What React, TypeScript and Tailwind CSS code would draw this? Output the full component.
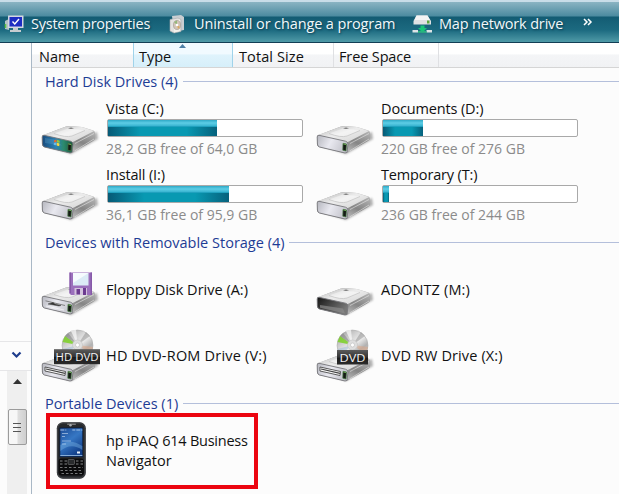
import type { ReactNode } from 'react';

type Media = 'system' | 'disk' | 'floppy' | 'empty' | 'hddvd' | 'dvd';

interface Drive {
  name: string;
  media: Media;
  tracking: string;
  used?: number;
  free?: string;
}

const HARD_DISKS: Drive[] = [
  { name: 'Vista (C:)', media: 'system', tracking: 'tracking-normal', used: 109, free: '28,2 GB free of 64,0 GB' },
  { name: 'Documents (D:)', media: 'disk', tracking: 'tracking-[-0.14px]', used: 40, free: '220 GB free of 276 GB' },
  { name: 'Install (I:)', media: 'disk', tracking: 'tracking-[-0.15px]', used: 121, free: '36,1 GB free of 95,9 GB' },
  { name: 'Temporary (T:)', media: 'disk', tracking: 'tracking-[-0.15px]', used: 6, free: '236 GB free of 244 GB' },
];

const REMOVABLE: Drive[] = [
  { name: 'Floppy Disk Drive (A:)', media: 'floppy', tracking: 'tracking-normal' },
  { name: 'ADONTZ (M:)', media: 'empty', tracking: 'tracking-[0.15px]' },
  { name: 'HD DVD-ROM Drive (V:)', media: 'hddvd', tracking: 'tracking-[0.2px]' },
  { name: 'DVD RW Drive (X:)', media: 'dvd', tracking: 'tracking-[0.12px]' },
];

/** Gradients shared by every drive icon on the page. */
function IconDefs() {
  return (
    <svg className="absolute h-0 w-0" aria-hidden="true">
      <defs>
        <linearGradient id="case-top" x1="0" y1="0" x2="1" y2="1">
          <stop offset="0" stopColor="#b4b4b4" />
          <stop offset="0.45" stopColor="#ececec" />
          <stop offset="1" stopColor="#d2d2d2" />
        </linearGradient>
        <linearGradient id="case-side" x1="0" y1="1" x2="0.8" y2="0">
          <stop offset="0" stopColor="#5c5c5c" />
          <stop offset="0.35" stopColor="#b4b4b4" />
          <stop offset="0.6" stopColor="#858585" />
          <stop offset="1" stopColor="#b9b9b9" />
        </linearGradient>
        <linearGradient id="case-front" x1="0" y1="0" x2="1" y2="0.3">
          <stop offset="0" stopColor="#b5b6be" />
          <stop offset="0.5" stopColor="#e9e9f0" />
          <stop offset="1" stopColor="#c6c6ce" />
        </linearGradient>
        <linearGradient id="front-system" x1="0" y1="0" x2="1" y2="0">
          <stop offset="0" stopColor="#184a7c" />
          <stop offset="0.45" stopColor="#2b82b5" />
          <stop offset="0.7" stopColor="#2c8a6b" />
          <stop offset="1" stopColor="#14533f" />
        </linearGradient>
        <linearGradient id="front-empty" x1="0" y1="0" x2="1" y2="0.5">
          <stop offset="0" stopColor="#151515" />
          <stop offset="1" stopColor="#777" />
        </linearGradient>
        <linearGradient id="disc" x1="0.1" y1="0" x2="0.9" y2="1">
          <stop offset="0" stopColor="#9b9b9b" />
          <stop offset="0.3" stopColor="#d0d0d0" />
          <stop offset="0.5" stopColor="#ededed" />
          <stop offset="0.7" stopColor="#b2b2b2" />
          <stop offset="1" stopColor="#d9d4cf" />
        </linearGradient>
        <linearGradient id="badge" x1="0" y1="0" x2="0" y2="1">
          <stop offset="0" stopColor="#5b5b5b" />
          <stop offset="0.5" stopColor="#333" />
          <stop offset="0.55" stopColor="#1b1b1b" />
          <stop offset="1" stopColor="#2b2b2b" />
        </linearGradient>
        <linearGradient id="phone-screen" x1="0" y1="0" x2="0.6" y2="1">
          <stop offset="0" stopColor="#1d4c96" />
          <stop offset="0.5" stopColor="#3677c4" />
          <stop offset="1" stopColor="#123f8a" />
        </linearGradient>
        <filter id="soft" x="-20%" y="-20%" width="140%" height="150%">
          <feGaussianBlur stdDeviation="1.3" />
        </filter>
      </defs>
    </svg>
  );
}

const FRONT_FILL: Record<Media, string> = {
  system: 'url(#front-system)',
  disk: 'url(#case-front)',
  floppy: 'url(#case-front)',
  empty: 'url(#front-empty)',
  hddvd: 'url(#case-front)',
  dvd: 'url(#case-front)',
};

function Disc() {
  return (
    <g>
      <circle cx="37.5" cy="22.500" r="15.500" fill="url(#disc)" stroke="#a5a5a5" strokeWidth="0.5" />
      <path d="M37.5 22 22.5 19 25 13z" fill="#7fd02f" opacity="0.9" />
      <path d="M37.5 22 25 13l3-3z" fill="#7d7d7d" opacity="0.5" />
      <path d="M37.5 22 31 8l5-1.500z" fill="#fff" opacity="0.65" />
      <path d="M37.5 22 46 9l4 4z" fill="#777" opacity="0.4" />
      <path d="M37.5 22 53 24l-2 7z" fill="#e3a27c" opacity="0.45" />
      <path d="M37.5 22 22.500 26l3 6z" fill="#7fa5cf" opacity="0.35" />
      <circle cx="37.5" cy="22" r="5" fill="#dedede" stroke="#c2c2c2" strokeWidth="0.6" />
      <circle cx="37.5" cy="22" r="2" fill="#fff" stroke="#b5b5b5" strokeWidth="0.5" />
    </g>
  );
}

function DriveIcon({ media }: { media: Media }) {
  const optical = media === 'hddvd' || media === 'dvd';
  return (
    <svg className="h-[66px] w-[62px] shrink-0" viewBox="0 0 62 66">
      <path d="M6 50 31 58 58 43 57 36 30 46z" fill="#555" opacity="0.45" filter="url(#soft)" />
      <g transform={optical || media === 'empty' ? 'translate(0 1)' : undefined}>
        <path
          d="M2.500 39.500 26 30.500Q27 30 29 30L42 31 53.500 34.500Q55 35 55 37L55 42Q55 44 53 45L33 56.500 30 57 4 51Q2 50 2 48z"
          fill="url(#case-side)"
        />
        <path d="M3 39 26 30.500Q28 30 30 30.200L42 31 54 35 34 45.500Q32 46.500 30 46z" fill="url(#case-top)" />
        <path d="M14 37.500 28 32.500 45 34.500 32 40Q26 42 14 37.500z" fill="#fff" opacity="0.4" />
        <path d="M14 37.500Q26 42 32 40L45 34.500" fill="none" stroke="#c2c2c2" strokeWidth="0.7" />
        <path d="M28 32.200 31 31.500 34 32.200 31 33z" fill="#777" />
        <path
          d="M4 39.300 30.500 45.200Q33 46 33 48L32 56.500 30 57 4.500 51Q2.500 50.300 2.400 48L2.200 41Q2.200 39 4 39.300z"
          fill={FRONT_FILL[media]}
          stroke="#77777c"
          strokeWidth="0.9"
        />
        <path d="M35 47.500 54 37.500M34.500 55 54 43" stroke="#ededed" strokeWidth="1" opacity="0.55" />
        {media === 'empty' && <path d="M5 47 28 50.500 30 55.500 5 49.800z" fill="#8a8a8a" opacity="0.7" />}
        {media !== 'empty' && (
          <>
            <path d="M28 47.300 31.500 48 31 55 27.800 54.200z" fill="#151b15" stroke="#477944" strokeWidth="0.7" />
            <path d="M28.300 48 31 48.600" stroke="#7fc462" strokeWidth="0.8" />
          </>
        )}
        {media === 'system' && (
          <g>
            <path d="M5 42 14 43.500 22 49.500 5 47z" fill="#79c1e3" opacity="0.22" />
            <path d="M14.200 44.200 16.500 43.500 16.400 46 14 46.500z" fill="#e8682c" />
            <path d="M17 43.700 19.700 44.700 19.500 47 16.900 46.200z" fill="#93c83c" />
            <path d="M13.900 47 16.300 46.600 16.200 49.200 13.700 49z" fill="#65b8ec" />
            <path d="M16.800 46.800 19.400 47.600 19.200 50.200 16.700 49.500z" fill="#f9d83e" />
          </g>
        )}
        {media === 'floppy' && (
          <g fill="none">
            <path d="M5.500 43.800 25 48.500" stroke="#777" strokeWidth="0.9" />
            <path d="M8 47 13 45.500 15 47 21 48.500 19 49z" fill="#333" stroke="#444" strokeWidth="0.5" />
            <path d="M6 49 24 53" stroke="#fff" strokeWidth="0.8" opacity="0.7" />
          </g>
        )}
        {optical && (
          <g fill="none">
            <path d="M5 43 25.500 47.500 25 51.500 5 47z" fill="#fafafa" stroke="#4a4a4a" strokeWidth="0.9" />
            <path d="M6 45 25 49.300" stroke="#444" strokeWidth="1.200" />
          </g>
        )}
      </g>
      {media === 'floppy' && (
        <g>
          <path d="M29.500 15.500H52V38H31L29.500 36.500z" fill="#9b70bc" />
          <path d="M29.500 15.500H31V36H29.500zM50.500 15.500H52V38H50.500z" fill="#8659a8" />
          <path d="M33 16H48.500V28.500H33z" fill="#dcecf6" />
          <path d="M33 16H48.500L33 26z" fill="#f6fbfe" />
          <path d="M34.500 31H47V38H34.500z" fill="#d3c3de" />
          <path d="M36.500 32H40V37.500H36.500zM43 31H46V38H43z" fill="#6c3b90" />
        </g>
      )}
      {optical && <Disc />}
      {media === 'hddvd' && (
        <g>
          <rect x="14" y="26.200" width="46" height="15" fill="url(#badge)" />
          <text x="15.500" y="38" textLength="43" lengthAdjust="spacingAndGlyphs" fill="#f3f3f3" className="font-['Open_Sans'] text-[11.5px]">
            HD DVD
          </text>
        </g>
      )}
      {media === 'dvd' && (
        <g>
          <rect x="22" y="27" width="31" height="14.500" fill="url(#badge)" />
          <text x="24.500" y="38.500" textLength="26" lengthAdjust="spacingAndGlyphs" fill="#f3f3f3" className="font-['Open_Sans'] text-[11.5px]">
            DVD
          </text>
        </g>
      )}
    </svg>
  );
}

function PhoneIcon() {
  return (
    <svg className="h-[66px] w-[62px] shrink-0" viewBox="0 0 62 66">
      <rect x="16.800" y="4.300" width="29" height="56.500" rx="6" fill="#27292c" />
      <rect x="17.600" y="5" width="27.400" height="55" rx="5.500" fill="none" stroke="#4b4e52" strokeWidth="0.8" />
      <rect x="27" y="5.500" width="9" height="1.500" rx="0.7" fill="#777" />
      <circle cx="30.500" cy="7.300" r="1.200" fill="#a9adb0" />
      <rect x="19.500" y="9.500" width="23.500" height="29.500" fill="#0b1d3c" />
      <rect x="20.300" y="10.300" width="22" height="28" fill="url(#phone-screen)" />
      <path d="M20.300 27Q30 20 42.300 28V32Q31 24 20.300 33z" fill="#74acdf" opacity="0.45" />
      <path d="M20.300 12H42.300" stroke="#b5d0ee" strokeWidth="0.9" strokeDasharray="4 1 1 6 3 1" />
      <path d="M22 15.500H28M22 18.500H25M22 23H31M22 26H26" stroke="#d5e5f6" strokeWidth="0.8" opacity="0.7" />
      <path d="M20.300 37.500H42.300" stroke="#92b7df" strokeWidth="0.9" />
      <rect x="37" y="33.500" width="3" height="2" fill="#e9f2fa" />
      <rect x="18.500" y="40.500" width="25.500" height="17" rx="3" fill="#0b0b0c" />
      <rect x="28" y="41.500" width="6.500" height="5" rx="1" fill="#292b2d" stroke="#777" strokeWidth="0.6" />
      <g stroke="#a3a5a7" strokeWidth="1" strokeDasharray="2.500 2">
        <path d="M20 43H27M36 43H43M20 46H27M36 46H43" opacity="0.8" />
        <path d="M20 49.500H43M20.500 52.500H43M21.500 55.500H42" opacity="0.7" />
      </g>
    </svg>
  );
}

function GroupHeader({ children, className }: { children: ReactNode; className: string }) {
  return (
    <div className={`flex items-center gap-[5px] pl-[13px] text-[#1e3c95] ${className}`}>
      <h2 className="whitespace-nowrap">{children}</h2>
      <span className="h-px flex-1 bg-[#b4bfdb]" />
    </div>
  );
}

function UsageBar({ used }: { used: number }) {
  return (
    <div className="ml-px h-[18px] w-[196px] rounded-[2px] border border-[#a9a9a9] bg-white">
      <div
        className="h-full bg-[linear-gradient(to_bottom,#2fa9c6_0,#5dcde6_3px,#38b4d0_6px,#0a8fae_7px,transparent_7px),linear-gradient(to_right,#065a76_0,#0899b2_30%,#0899b2_72%,#06617c_100%)]"
        style={{ width: used }}
      />
    </div>
  );
}

function DriveTile({ drive }: { drive: Drive }) {
  return (
    <div className="flex h-[66px] items-center gap-1">
      <DriveIcon media={drive.media} />
      <div className="whitespace-nowrap">
        <div className={`leading-5 ${drive.tracking}`}>{drive.name}</div>
        {drive.used !== undefined && (
          <>
            <UsageBar used={drive.used} />
            <div className="mt-px text-[14px] leading-[21px] text-[#8b8b8b]">{drive.free}</div>
          </>
        )}
      </div>
    </div>
  );
}

function DriveGrid({ drives }: { drives: Drive[] }) {
  return (
    <div className="grid grid-cols-[275px_275px] pl-2">
      {drives.map((d) => (
        <DriveTile key={d.name} drive={d} />
      ))}
    </div>
  );
}

function Toolbar() {
  return (
    <header className="flex h-[43px] items-center border-t-2 border-b border-t-[#c9dde8] border-b-[#123e55] bg-[linear-gradient(to_bottom,#8bb4c3_0,#4c8ba0_14px,#135c73_15px,#1c6a80_28px,#4f9aa7_40px)] pt-1 pl-1 text-[14.5px] whitespace-nowrap text-[#f1f8fa] [text-shadow:1px_1px_2px_#0c3d50]">
      <svg className="h-5 w-[21px]" viewBox="0 0 21 20">
        <path d="M1 7 5 5V16L1 15z" fill="#b4c2c5" />
        <path d="M1.500 10V14" stroke="#61c747" strokeWidth="1.500" />
        <path d="M4 1.500H19.500V14H4z" fill="#d3d6e2" />
        <path d="M5.500 3H18V12.500H5.500z" fill="#1d2cc2" />
        <path d="m8.500 7.500 2.300 2.500L15 5" fill="none" stroke="#fff" strokeWidth="1.400" />
        <path d="M9 14H14V16H17V18H6V16H9z" fill="#c7ccd0" />
      </svg>
      <span className="ml-[6px] w-[138px] tracking-[-0.23px]">System properties</span>
      <svg className="h-5 w-4" viewBox="0 0 16 20">
        <path d="M3 2 12 1 15 3V16L5 18z" fill="#c9ced2" />
        <path d="M1 5.500 9 4 12 5.500V17.500L5 19 1 17z" fill="#e4e2e0" stroke="#a5a9ab" strokeWidth="0.6" />
        <path d="M5 7.500 11 5.500V17L5 18.500z" fill="#f4f1eb" />
        <ellipse cx="8" cy="11" rx="3.500" ry="4.500" fill="#d3c6b9" stroke="#a59c94" strokeWidth="0.7" />
        <path d="M8 11 5 8 8 6.500z" fill="#93b878" />
        <path d="M8 11 11 13 9 15z" fill="#dba95f" />
        <circle cx="8" cy="11" r="1.300" fill="#fff" />
      </svg>
      <span className="ml-[9px] w-[218px] tracking-[-0.12px]">Uninstall or change a program</span>
      <svg className="h-5 w-5" viewBox="0 0 20 20">
        <path d="M4.500 1.500H15.500L19 7V10.500H1.500V7z" fill="#dfe1e3" />
        <path d="M4.500 1.500H15.500L18 6H2.500z" fill="#f4f4f4" />
        <rect x="15" y="6.500" width="2.500" height="3" fill="#58a83d" />
        <path d="M8.500 11.500H12.500V14H15L10.500 18.500 6 14H8.500z" fill="#18c678" />
        <path d="M.5 16H6V18.500H.5zM14.500 16H20V18.500H14.500z" fill="#dce4e6" />
        <path d="M6 17H14.500V18.800H6z" fill="#2ab280" />
      </svg>
      <span className="ml-[7px] w-[144px] tracking-[-0.17px]">Map network drive</span>
      <svg className="-mt-1 h-2 w-[10px]" viewBox="0 0 10 8">
        <path d="m1 1 3 3-3 3M5 1l3 3-3 3" fill="none" stroke="#fff" strokeWidth="1.500" />
      </svg>
    </header>
  );
}

function ColumnHeaders() {
  return (
    <div className="flex h-[25px] border-b border-[#d5d5d5] bg-[linear-gradient(to_bottom,#fff_45%,#f4f5f7_50%,#f1f2f4)] pl-px leading-[27px] whitespace-nowrap">
      <div className="w-[100px] pl-[6px]">Name</div>
      <div className="relative w-[100px] border-x border-[#a0d3ea] bg-[linear-gradient(to_bottom,#f1faff_45%,#dff3fc_50%,#d6effa)] pl-[5px]">
        Type
        <svg className="absolute top-px left-[45px] h-1 w-[7px]" viewBox="0 0 7 4">
          <path d="M3.500 0 7 4H0z" fill="#4d7fa6" />
        </svg>
      </div>
      <div className="w-[101px] border-r border-[#dfe0e3] pl-[6px] tracking-[0.1px]">Total Size</div>
      <div className="w-[105px] border-r border-[#dfe0e3] pl-[5px] tracking-[-0.13px]">Free Space</div>
    </div>
  );
}

function Sidebar() {
  return (
    <nav className="flex w-8 shrink-0 flex-col border-r border-[#a9b8c6]">
      <div className="h-[299px] border-b border-[#e6e6e8]" />
      <div className="flex h-[29px] items-center justify-end border-b border-[#e6e6e8] pr-[9px]">
        <svg className="mt-[-3px] h-2 w-[11px]" viewBox="0 0 11 8">
          <path d="m1.500 1.500 4 4 4-4" fill="none" stroke="#1d3c8c" strokeWidth="2.200" />
        </svg>
      </div>
      <div className="ml-[7px] flex w-5 flex-1 flex-col items-center bg-[#efefef]">
        <svg className="mt-2 h-[5px] w-[9px]" viewBox="0 0 9 5">
          <path d="M4.500 0 9 5H0z" fill="#333" />
        </svg>
        <div className="mt-[25px] flex h-9 w-[19px] flex-col items-center justify-center gap-[3px] rounded-[2px] border border-[#9b9b9b] bg-[linear-gradient(to_right,#f7f7f7_45%,#dedede_55%,#cfcfcf)]">
          <span className="h-px w-2 bg-[#555]" />
          <span className="h-px w-2 bg-[#555]" />
          <span className="h-px w-2 bg-[#555]" />
        </div>
      </div>
    </nav>
  );
}

export default function App() {
  return (
    <div className="flex h-[494px] w-[619px] flex-col overflow-hidden bg-[#fcfcfc] font-['Open_Sans','Noto_Sans',sans-serif] text-[14.5px] text-[#111]">
      <IconDefs />
      <Toolbar />
      <div className="flex min-h-0 flex-1">
        <Sidebar />
        <main className="min-w-0 flex-1">
          <ColumnHeaders />
          <GroupHeader className="h-[27px]">Hard Disk Drives (4)</GroupHeader>
          <div className="pt-px">
            <DriveGrid drives={HARD_DISKS} />
          </div>
          <GroupHeader className="h-[29px]">Devices with Removable Storage (4)</GroupHeader>
          <DriveGrid drives={REMOVABLE} />
          <GroupHeader className="h-[29px]">Portable Devices (1)</GroupHeader>
          <div className="-mt-[5px] ml-[14px] flex h-[76px] w-[212px] items-center border-4 border-[#ec0510]">
            <div className="-ml-[10px] flex items-center gap-1">
              <PhoneIcon />
              <div className="leading-[20px] whitespace-nowrap">
                <span className="tracking-[-0.24px]">hp iPAQ 614 Business</span>
                <br />
                Navigator
              </div>
            </div>
          </div>
        </main>
      </div>
    </div>
  );
}
